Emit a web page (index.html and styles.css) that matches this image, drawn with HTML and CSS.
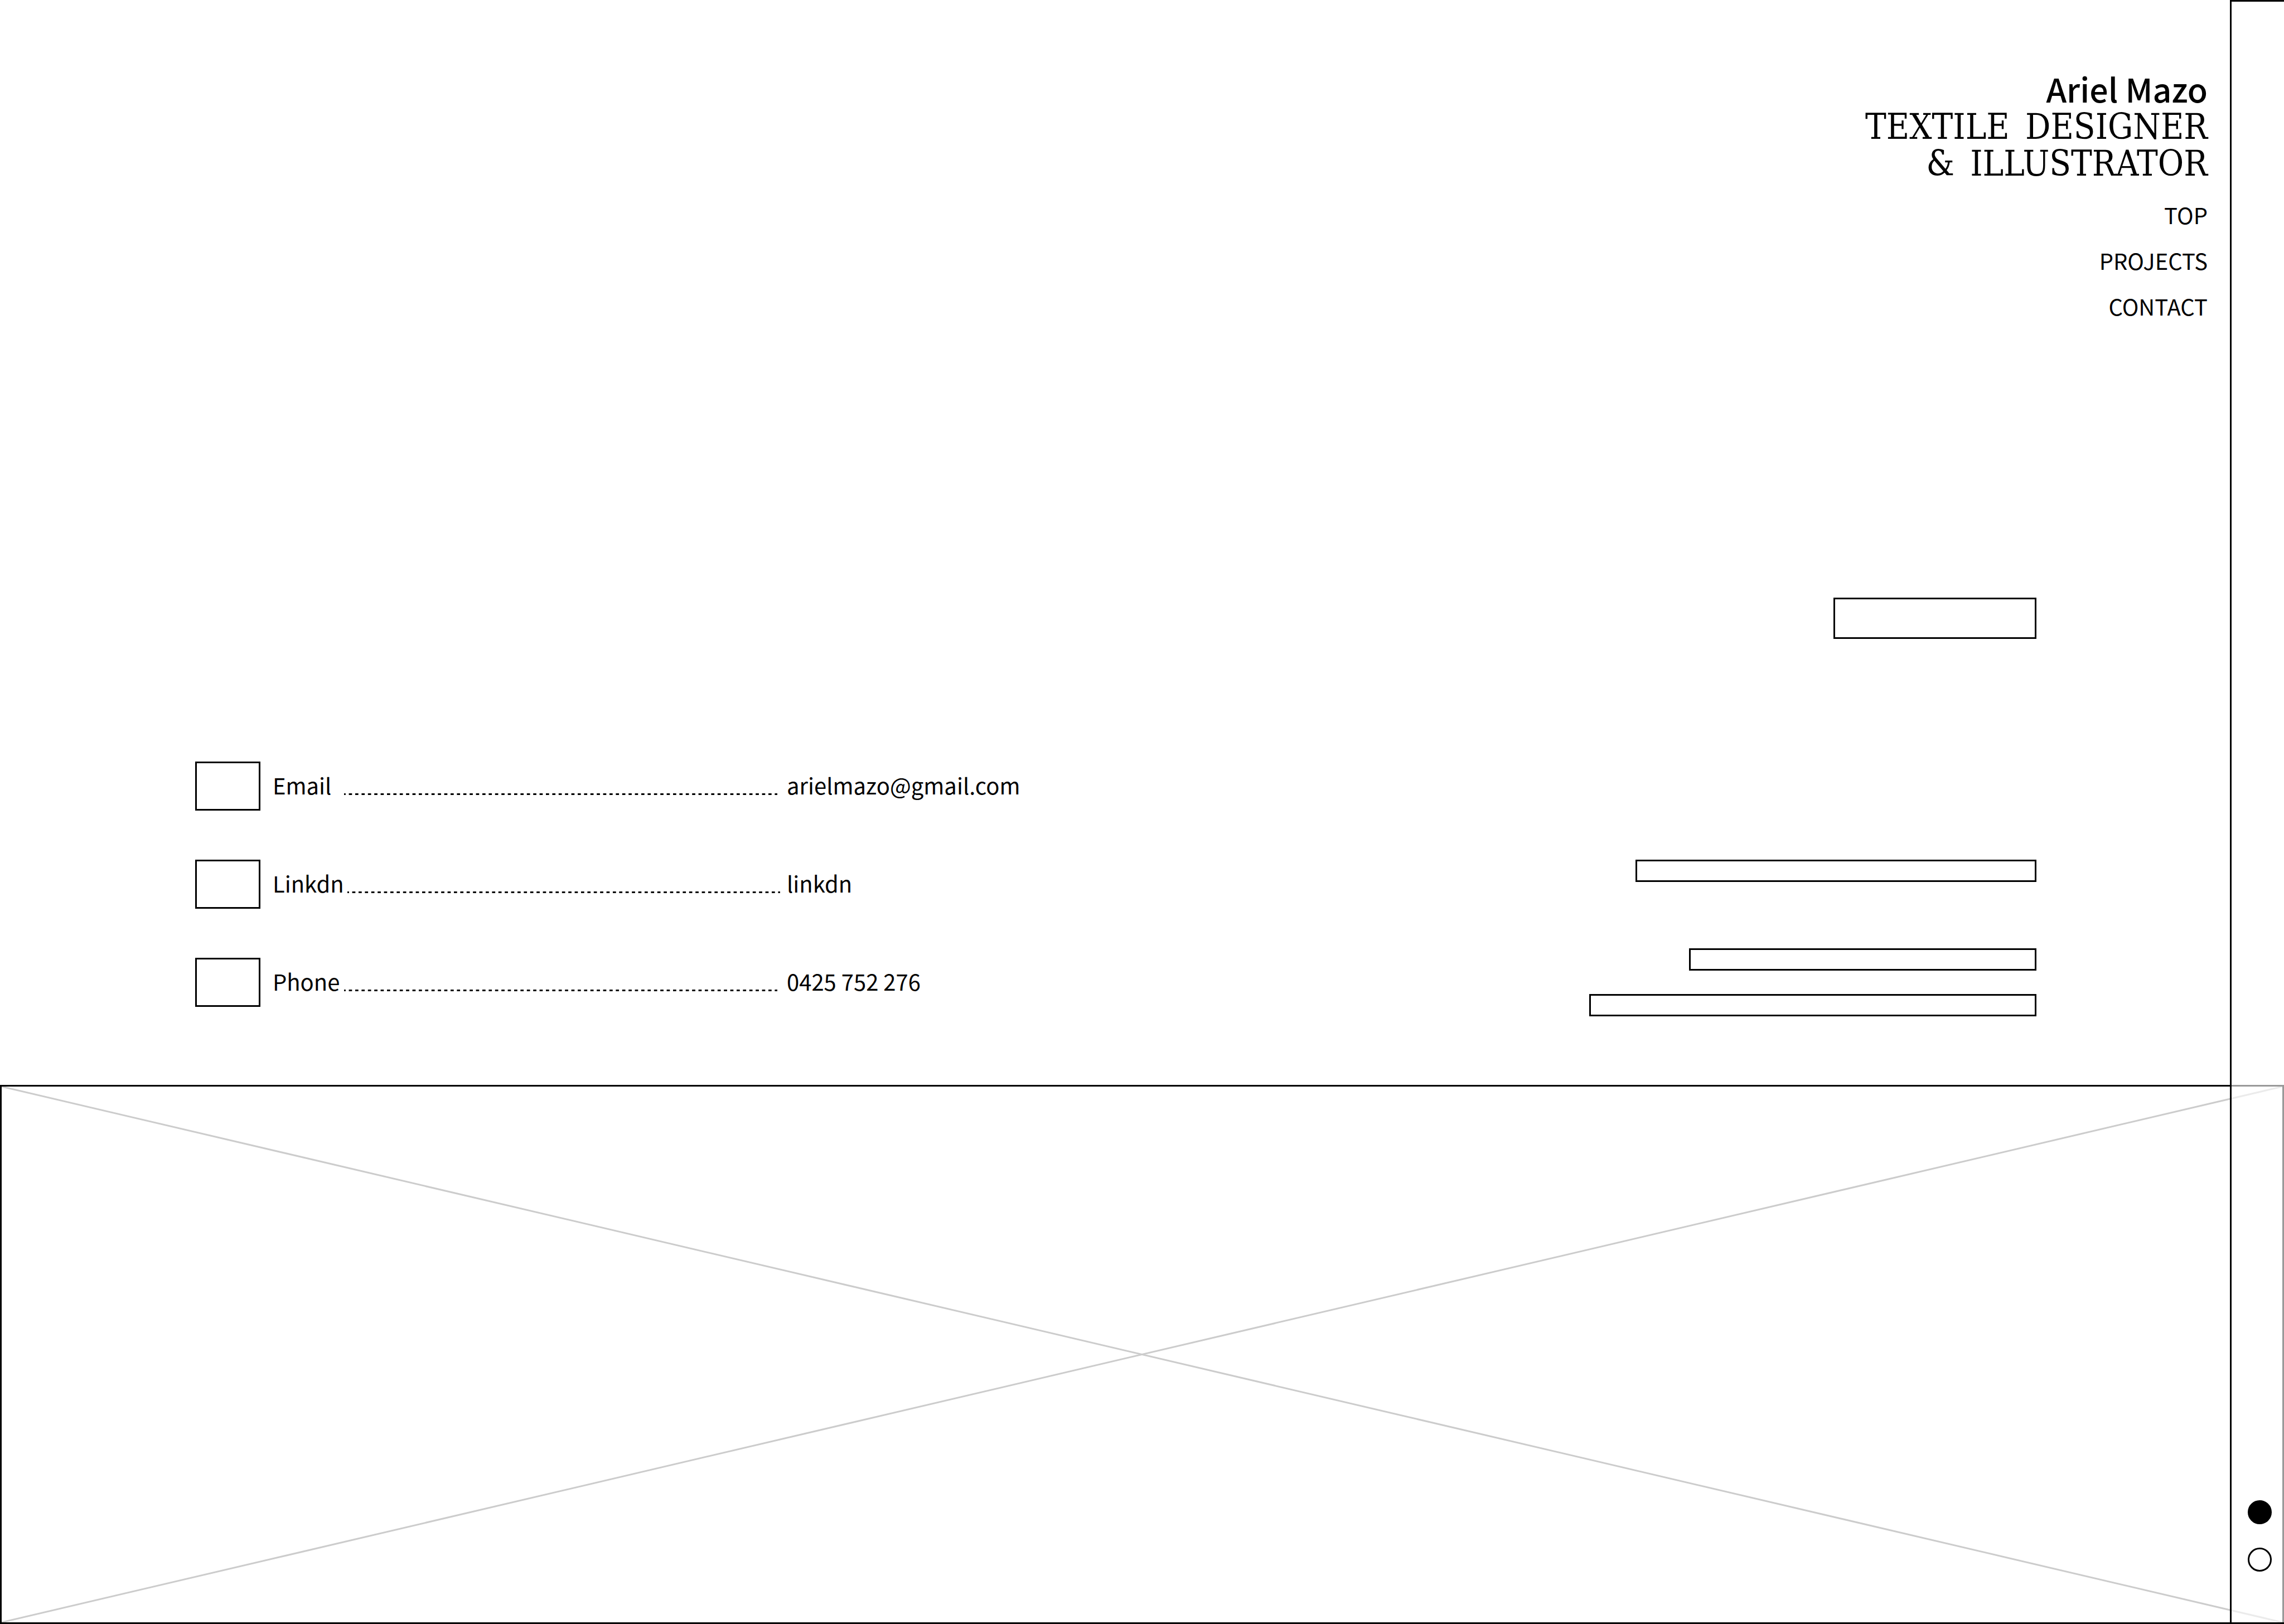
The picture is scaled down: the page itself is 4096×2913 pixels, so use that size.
FILE: index.html
```html
<!DOCTYPE html>
<html lang="en">
<head>
<meta charset="utf-8">
<meta name="viewport" content="width=device-width, initial-scale=1">
<title>Ariel Mazo</title>
<link rel="stylesheet" href="styles.css">
</head>
<body>
<div class="page">
  <main class="main">
    <header class="header">
      <h1 class="name">Ariel Mazo</h1>
      <p class="role">TEXTILE&ensp;DESIGNER</p>
      <p class="role">&amp;&ensp;ILLUSTRATOR</p>
      <nav class="nav">
        <a class="nav-link" href="#top">TOP</a>
        <a class="nav-link" href="#projects">PROJECTS</a>
        <a class="nav-link" href="#contact">CONTACT</a>
      </nav>
    </header>
    <section class="contact" id="contact">
      <dl class="contact-list">
        <div class="contact-row">
          <span class="box contact-icon"></span>
          <dt class="contact-term"><span class="contact-label">Email</span><svg class="leader" aria-hidden="true"><line class="leader-line" x1="0" y1="50%" x2="100%" y2="50%"/></svg></dt>
          <dd class="contact-value"><a href="mailto:arielmazo@gmail.com">arielmazo@gmail.com</a></dd>
        </div>
        <div class="contact-row">
          <span class="box contact-icon"></span>
          <dt class="contact-term"><span class="contact-label">Linkdn</span><svg class="leader" aria-hidden="true"><line class="leader-line" x1="0" y1="50%" x2="100%" y2="50%"/></svg></dt>
          <dd class="contact-value"><a href="#linkdn">linkdn</a></dd>
        </div>
        <div class="contact-row">
          <span class="box contact-icon"></span>
          <dt class="contact-term"><span class="contact-label">Phone</span><svg class="leader" aria-hidden="true"><line class="leader-line" x1="0" y1="50%" x2="100%" y2="50%"/></svg></dt>
          <dd class="contact-value"><a href="tel:0425752276">0425 752 276</a></dd>
        </div>
      </dl>
      <div class="blocks">
        <div class="box block-title"></div>
        <div class="box block-line block-lead"></div>
        <div class="box block-line block-short"></div>
        <div class="box block-line block-long"></div>
      </div>
    </section>
  </main>
  <div class="band">
    <svg class="band-cross" aria-hidden="true">
      <line x1="0" y1="0" x2="100%" y2="100%"/>
      <line x1="0" y1="100%" x2="100%" y2="0"/>
    </svg>
  </div>
  <aside class="rail">
    <button class="dot dot-active" type="button" aria-label="First page"></button>
    <button class="dot" type="button" aria-label="Second page"></button>
  </aside>
</div>
</body>
</html>
```
FILE: styles.css
```css
* {
  box-sizing: border-box;
}

body,
h1,
p,
dl,
dd {
  margin: 0;
}

body {
  background: #fff;
  color: #000;
  font-family: "Noto Sans CJK SC", "Noto Sans", sans-serif;
  font-size: 40px;
}

a {
  color: inherit;
  text-decoration: none;
}

.page {
  display: grid;
  grid-template-columns: 1fr 97px;
  grid-template-rows: auto 1fr;
  min-height: 100vh;
}

.main {
  grid-area: 1 / 1;
  padding: 123px 0;
}

/* Name, role and navigation */
.header {
  padding-right: 40px;
  text-align: right;
}

.name {
  font-size: 59px;
  font-weight: 500;
  line-height: 72px;
}

.role {
  font-family: "DejaVu Serif Condensed", "DejaVu Serif", serif;
  font-size: 63px;
  line-height: 66px;
}

.nav {
  display: flex;
  flex-direction: column;
  align-items: flex-end;
  margin-top: 17px;
}

.nav-link {
  line-height: 82px;
}

/* Contact details and text blocks */
.contact {
  display: flex;
  justify-content: space-between;
  align-items: flex-start;
  margin-top: 482px;
  padding: 0 347px 0 350px;
}

.box {
  border: 3px solid #000;
}

.contact-list {
  display: grid;
  gap: 88px;
  margin-top: 294px;
}

.contact-row {
  display: grid;
  grid-template-columns: 117px 920px auto;
  column-gap: 12px;
  line-height: 84px;
}

.contact-icon {
  height: 88px;
}

.contact-term {
  display: flex;
  padding-left: 10px;
}

.contact-label {
  min-width: 128px;
  padding-right: 6px;
}

.leader {
  width: 777px;
  height: 3px;
  margin-top: 57px;
}

.leader-line {
  stroke: #000;
  stroke-width: 3;
  stroke-dasharray: 5.7 5.7;
  stroke-dashoffset: 2.8;
}

.blocks {
  display: flex;
  flex-direction: column;
  align-items: flex-end;
}

.block-title {
  width: 364px;
  height: 74px;
}

.block-line {
  height: 40px;
}

.block-lead {
  width: 719px;
  margin-top: 396px;
}

.block-short {
  width: 623px;
  margin-top: 119px;
}

.block-long {
  width: 802px;
  margin-top: 42px;
}

/* Picture band, which runs on beneath the rail */
.band {
  display: grid;
  grid-area: 2 / 1 / 3 / 3;
  border: 3px solid #000;
}

.band-cross {
  width: 100%;
  height: 100%;
  stroke: #ccc;
  stroke-width: 3;
}

.rail {
  display: flex;
  flex-direction: column;
  justify-content: flex-end;
  align-items: center;
  gap: 42px;
  grid-area: 1 / 2 / 3 / 3;
  z-index: 1;
  border: solid #000;
  border-width: 3px 0 3px 3px;
  padding: 0 0 91px 6px;
  background: rgba(255, 255, 255, 0.6);
}

.dot {
  width: 43px;
  height: 43px;
  padding: 0;
  border: 3px solid #000;
  border-radius: 50%;
  background: #fff;
}

.dot-active {
  background: #000;
}
```
